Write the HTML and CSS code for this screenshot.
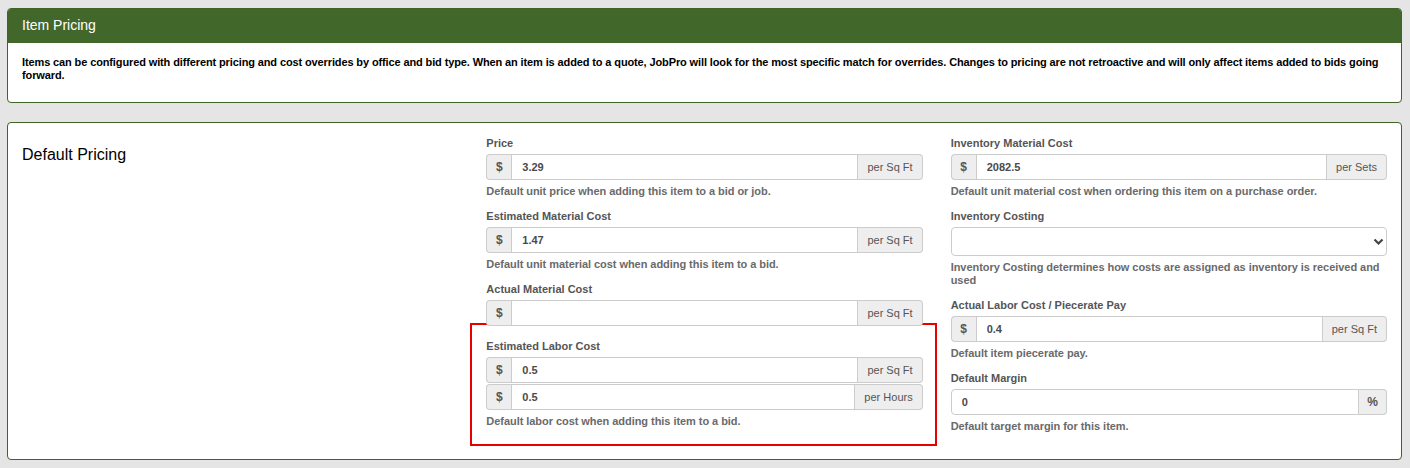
FILE: index.html
```html
<!DOCTYPE html>
<html lang="en">
<head>
  <meta charset="UTF-8" />
  <title>Item Pricing</title>
  <link rel="stylesheet" href="styles.css">
</head>
<body>

<div class="panel">
  <div class="panel-heading">Item Pricing</div>
  <div class="panel-body">
    Items can be configured with different pricing and cost overrides by office and bid type. When an item is added to a quote, JobPro will look for the most specific match for overrides. Changes to pricing are not retroactive and will only affect items added to bids going forward.
  </div>
</div>

<div class="panel pricing">
  <div class="col">
    <h3 class="section-title">Default Pricing</h3>
  </div>

  <div class="col">
    <div class="field">
      <label>Price</label>
      <div class="input-group">
        <span class="addon addon-left">$</span>
        <input type="text" value="3.29">
        <span class="addon addon-right unit">per Sq Ft</span>
      </div>
      <p class="help">Default unit price when adding this item to a bid or job.</p>
    </div>

    <div class="field">
      <label>Estimated Material Cost</label>
      <div class="input-group">
        <span class="addon addon-left">$</span>
        <input type="text" value="1.47">
        <span class="addon addon-right unit">per Sq Ft</span>
      </div>
      <p class="help">Default unit material cost when adding this item to a bid.</p>
    </div>

    <div class="field">
      <label>Actual Material Cost</label>
      <div class="input-group">
        <span class="addon addon-left">$</span>
        <input type="text" value="">
        <span class="addon addon-right unit">per Sq Ft</span>
      </div>
    </div>

    <div class="highlight">
      <label>Estimated Labor Cost</label>
      <div class="input-group">
        <span class="addon addon-left">$</span>
        <input type="text" value="0.5">
        <span class="addon addon-right unit">per Sq Ft</span>
      </div>
      <div class="input-group stacked">
        <span class="addon addon-left">$</span>
        <input type="text" value="0.5">
        <span class="addon addon-right unit">per Hours</span>
      </div>
      <p class="help">Default labor cost when adding this item to a bid.</p>
    </div>
  </div>

  <div class="col">
    <div class="field">
      <label>Inventory Material Cost</label>
      <div class="input-group">
        <span class="addon addon-left">$</span>
        <input type="text" value="2082.5">
        <span class="addon addon-right unit">per Sets</span>
      </div>
      <p class="help">Default unit material cost when ordering this item on a purchase order.</p>
    </div>

    <div class="field">
      <label>Inventory Costing</label>
      <div class="select-wrap">
        <select>
          <option></option>
        </select>
        <svg class="chevron" width="11" height="8" viewBox="0 0 11 8">
          <path d="M1.5 1.5 L5.5 5.5 L9.5 1.5" fill="none" stroke="#444" stroke-width="2.2"/>
        </svg>
      </div>
      <p class="help">Inventory Costing determines how costs are assigned as inventory is received and used</p>
    </div>

    <div class="field">
      <label>Actual Labor Cost / Piecerate Pay</label>
      <div class="input-group">
        <span class="addon addon-left">$</span>
        <input type="text" value="0.4">
        <span class="addon addon-right unit">per Sq Ft</span>
      </div>
      <p class="help">Default item piecerate pay.</p>
    </div>

    <div class="field">
      <label>Default Margin</label>
      <div class="input-group">
        <input type="text" value="0" class="plain">
        <span class="addon addon-right">%</span>
      </div>
      <p class="help">Default target margin for this item.</p>
    </div>
  </div>
</div>

</body>
</html>
```

FILE: styles.css
```css
:root {
  --green: #42672b;
  --green-border: #3e6426;
  --bg: #e5e5e5;
  --border: #cccccc;
  --addon-bg: #eeeeee;
  --label: #555555;
  --help: #6a6a6a;
}

body {
  margin: 0;
  padding: 8px 8px 8px 7px;
  background: var(--bg);
  font-family: 'Liberation Sans', Arial, sans-serif;
  font-size: 11px;
  color: #000;
}

.panel {
  background: #fff;
  border: 1px solid var(--green-border);
  border-radius: 4px;
  overflow: hidden;
}

.panel-heading {
  background: var(--green);
  color: #fff;
  font-size: 14px;
  height: 34px;
  line-height: 33px;
  padding: 0 14px;
}

.panel-body {
  font-weight: bold;
  line-height: 13px;
  letter-spacing: -0.12px;
  padding: 13px 14px 20px;
}

.pricing {
  margin-top: 19px;
  display: grid;
  grid-template-columns: repeat(3, 1fr);
  padding: 13px 0 13px;
  overflow: visible;
}

.col {
  padding: 0 14px;
  min-width: 0;
}

.section-title {
  margin: 9px 0 0;
  font-size: 16px;
  font-weight: normal;
  line-height: 20px;
}

.field {
  margin-bottom: 11px;
}

label {
  display: block;
  font-weight: bold;
  color: var(--label);
  line-height: 15px;
  margin-bottom: 3px;
}

.input-group {
  display: flex;
  height: 26px;
}

.input-group.stacked {
  margin-top: 1px;
}

.addon {
  display: flex;
  align-items: center;
  justify-content: center;
  background: var(--addon-bg);
  border: 1px solid var(--border);
  color: var(--label);
  font-weight: bold;
  font-size: 12px;
  padding: 0 8px;
  box-sizing: border-box;
}

.addon.unit {
  font-weight: normal;
  font-size: 11px;
  padding: 0 9px;
}

.addon-left {
  width: 25px;
  border-radius: 4px 0 0 4px;
  border-right: none;
}

.addon-right {
  border-radius: 0 4px 4px 0;
  border-left: none;
  min-width: 28px;
}

input {
  flex: 1;
  min-width: 0;
  border: 1px solid var(--border);
  font-family: inherit;
  font-size: 11px;
  font-weight: bold;
  color: #4a4a4a;
  padding: 0 10px;
  margin: 0;
  box-sizing: border-box;
  outline: none;
}

input.plain {
  border-radius: 4px 0 0 4px;
}

.help {
  margin: 5px 0 0;
  font-weight: bold;
  color: var(--help);
  line-height: 13px;
  letter-spacing: -0.05px;
}

.select-wrap {
  position: relative;
  height: 29px;
}

select {
  -webkit-appearance: none;
  appearance: none;
  width: 100%;
  height: 29px;
  border: 1px solid var(--border);
  border-radius: 4px;
  background: #fff;
  margin: 0;
}

.chevron {
  position: absolute;
  right: 3px;
  top: 11px;
}

.highlight {
  border: 2px solid #e60000;
  margin: -14px -14px 0 -16px;
  padding: 14px 12px 16px 14px;
}
```
